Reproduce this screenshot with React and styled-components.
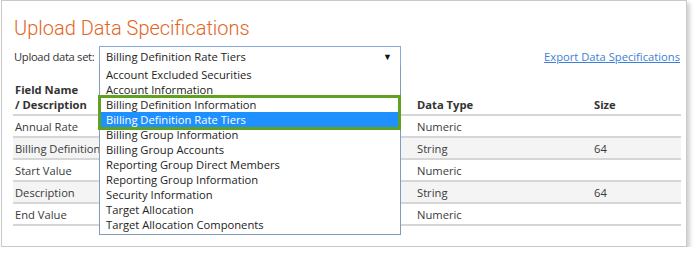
import React from "react";
import styled, { createGlobalStyle } from "styled-components";

const Global = createGlobalStyle`
  html, body { margin: 0; padding: 0; background: #fff; }
  body { font-family: "Open Sans", "Noto Sans", sans-serif; color: #333; }
`;

const Frame = styled.div`
  position: relative;
  box-sizing: border-box;
  margin-left: 1px;
  width: 686px;
  height: 247px;
  border: 1px solid #c9c9c9;
  box-shadow: 3px 3px 4px rgba(0, 0, 0, 0.18);
  padding: 0 5px 0 11px;
  background: #fff;
`;

const Title = styled.h1`
  margin: 0;
  padding-top: 13px;
  padding-left: 1px;
  font-family: "Roboto", "Open Sans", sans-serif;
  font-size: 20px;
  line-height: 28px;
  font-weight: 300;
  color: #e2651d;
`;

const Toolbar = styled.div`
  display: flex;
  align-items: center;
  justify-content: space-between;
  margin-top: 4px;
  height: 20px;
  font-size: 11.2px;
`;

const Field = styled.div`
  display: flex;
  align-items: center;
`;

const Label = styled.span`
  flex: 0 0 86px;
  padding-left: 1px;
  box-sizing: border-box;
  white-space: nowrap;
  letter-spacing: -0.3px;
`;

const SelectBox = styled.div`
  box-sizing: border-box;
  width: 302px;
  height: 20px;
  border: 1px solid #86a8da;
  display: flex;
  align-items: center;
  justify-content: space-between;
  padding: 0 8px 0 6px;
  color: #222;
`;

const Arrow = styled.span`
  font-size: 9px;
  color: #111;
`;

const ExportLink = styled.a`
  color: #3d7fd5;
  text-decoration: underline;
  margin-right: 1px;
`;

const Table = styled.div`
  margin-top: 17px;
  font-size: 11.2px;
`;

const Row = styled.div`
  display: grid;
  grid-template-columns: 402px 177px 1fr;
  align-items: center;
  height: ${(p) => (p.$head ? "33px" : "22px")};
  border-bottom: 2px solid #d6d6d6;
  background: ${(p) => (p.$alt ? "#f4f4f4" : "#fff")};
  box-sizing: border-box;
  font-weight: ${(p) => (p.$head ? 700 : 400)};
  color: ${(p) => (p.$head ? "#333" : "#3a3a3a")};
`;

const Cell = styled.div`
  padding-left: 2px;
  line-height: 15px;
  white-space: nowrap;
  overflow: hidden;
`;

const HeadCell = styled(Cell)`
  align-self: end;
  padding-bottom: 2px;
`;

const Dropdown = styled.ul`
  position: absolute;
  left: 97px;
  top: 64px;
  width: 302px;
  box-sizing: border-box;
  margin: 0;
  padding: 2px 0 2px;
  list-style: none;
  background: #fff;
  border: 1px solid #7f9db9;
  border-top: none;
  font-size: 11.2px;
`;

const Option = styled.li`
  height: 15px;
  line-height: 15px;
  padding-left: 6px;
  color: ${(p) => (p.$selected ? "#fff" : "#222")};
  background: ${(p) => (p.$selected ? "#1e90ff" : "transparent")};
  white-space: nowrap;
`;

const Highlight = styled.div`
  position: absolute;
  left: 96px;
  top: 94px;
  width: 303px;
  height: 35px;
  box-sizing: border-box;
  border: 3px solid #5ea21f;
  pointer-events: none;
`;

const options = [
  "Account Excluded Securities",
  "Account Information",
  "Billing Definition Information",
  "Billing Definition Rate Tiers",
  "Billing Group Information",
  "Billing Group Accounts",
  "Reporting Group Direct Members",
  "Reporting Group Information",
  "Security Information",
  "Target Allocation",
  "Target Allocation Components",
];

const rows = [
  ["Annual Rate", "Numeric", ""],
  ["Billing Definition", "String", "64"],
  ["Start Value", "Numeric", ""],
  ["Description", "String", "64"],
  ["End Value", "Numeric", ""],
];

export default function App() {
  return (
    <>
      <Global />
      <Frame>
        <Title>Upload Data Specifications</Title>
        <Toolbar>
          <Field>
            <Label>Upload data set:</Label>
            <SelectBox>
              <span>Billing Definition Rate Tiers</span>
              <Arrow>▼</Arrow>
            </SelectBox>
          </Field>
          <ExportLink href="#">Export Data Specifications</ExportLink>
        </Toolbar>
        <Table>
          <Row $head>
            <HeadCell>
              Field Name
              <br />/ Description
            </HeadCell>
            <HeadCell>Data Type</HeadCell>
            <HeadCell>Size</HeadCell>
          </Row>
          {rows.map((r, i) => (
            <Row key={r[0]} $alt={i % 2 === 1}>
              <Cell>{r[0]}</Cell>
              <Cell>{r[1]}</Cell>
              <Cell>{r[2]}</Cell>
            </Row>
          ))}
        </Table>
        <Dropdown>
          {options.map((o) => (
            <Option key={o} $selected={o === "Billing Definition Rate Tiers"}>
              {o}
            </Option>
          ))}
        </Dropdown>
        <Highlight />
      </Frame>
    </>
  );
}
